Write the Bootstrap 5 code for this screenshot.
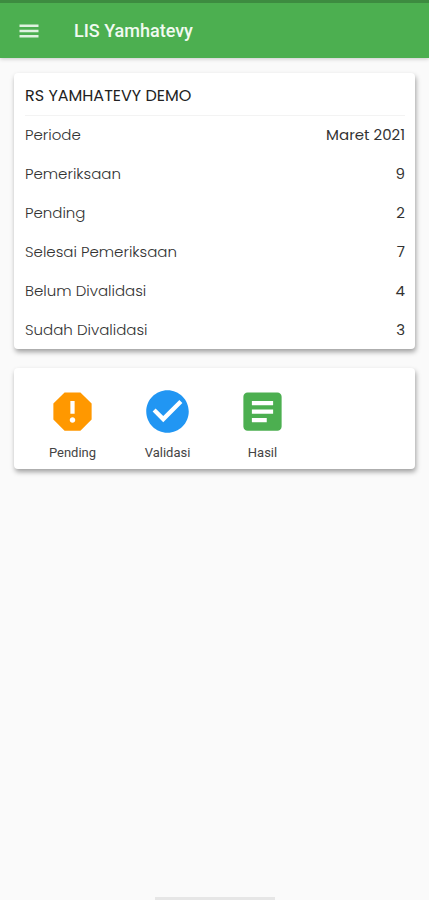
<!DOCTYPE html>
<html lang="id">
<head>
<meta charset="utf-8">
<meta name="viewport" content="width=device-width, initial-scale=1">
<title>LIS Yamhatevy</title>
<link href="https://cdn.jsdelivr.net/npm/bootstrap@5.3.0/dist/css/bootstrap.min.css" rel="stylesheet">
<style>
body { background: #fafafa; font-family: Poppins, Inter, "Liberation Sans", sans-serif; }
.app-bar { background: #4caf50; border-top: 3px solid #3d8b40; height: 58px; padding: 0 17px; gap: 33px; box-shadow: 0 1px 4px rgba(0,0,0,.2); }
.app-title { font: 500 18px/24px Roboto, sans-serif; color: #f1faf1; }
.menu-btn { line-height: 0; color: #dff2e0; }
.page { padding: 15px 14px 0; gap: 19px; }
.panel { border: 0; border-radius: 4px; box-shadow: 1px 3px 5px rgba(0,0,0,.36); }
.summary { padding: 0 10px 0 11px; }
.summary-title { font-size: 16px; line-height: 24px; padding: 11px 0 7px; color: #222; border-bottom: 1px solid #f3f3f3; }
.stats { min-height: 233px; }
.stat { font-size: 15px; line-height: 24px; }
.stat dt { font-weight: 300; color: #333; }
.stat dd { font-weight: 400; color: #333; }
.shortcuts { padding: 18px 11px 8px; }
.shortcut { width: 95px; font: 400 13px/16px Roboto, sans-serif; color: #444; gap: 8px; }
.home-bar { width: 120px; height: 3px; background: #e6e6e6; }
</style>
<script defer src="https://cdn.jsdelivr.net/npm/bootstrap@5.3.0/dist/js/bootstrap.bundle.min.js"></script>
</head>
<body class="d-flex flex-column min-vh-100">
<header class="app-bar d-flex align-items-center">
  <button type="button" class="menu-btn btn p-0 border-0" aria-label="Menu">
    <svg width="24" height="24" viewBox="0 0 24 24" fill="currentColor"><path d="M2.500 18.500h19v-2.500h-19zM2.500 13.200h19v-2.500h-19zM2.500 5.500v2.500h19v-2.500z"/></svg>
  </button>
  <h1 class="app-title m-0">LIS Yamhatevy</h1>
</header>
<main class="page d-flex flex-column flex-grow-1">
  <section class="panel summary card">
    <h2 class="summary-title fw-normal m-0">RS YAMHATEVY DEMO</h2>
    <dl class="stats d-flex flex-column m-0">
      <div class="stat flex-fill d-flex justify-content-between align-items-center"><dt>Periode</dt><dd class="m-0">Maret 2021</dd></div>
      <div class="stat flex-fill d-flex justify-content-between align-items-center"><dt>Pemeriksaan</dt><dd class="m-0">9</dd></div>
      <div class="stat flex-fill d-flex justify-content-between align-items-center"><dt>Pending</dt><dd class="m-0">2</dd></div>
      <div class="stat flex-fill d-flex justify-content-between align-items-center"><dt>Selesai Pemeriksaan</dt><dd class="m-0">7</dd></div>
      <div class="stat flex-fill d-flex justify-content-between align-items-center"><dt>Belum Divalidasi</dt><dd class="m-0">4</dd></div>
      <div class="stat flex-fill d-flex justify-content-between align-items-center"><dt>Sudah Divalidasi</dt><dd class="m-0">3</dd></div>
    </dl>
  </section>
  <nav class="panel shortcuts card flex-row flex-wrap" aria-label="Menu utama">
    <a href="#pending" class="shortcut d-flex flex-column align-items-center text-decoration-none">
      <svg width="51" height="51" viewBox="0 0 24 24" fill="#ff9800" aria-hidden="true"><path d="M15.730 3H8.270L3 8.270v7.460L8.270 21h7.460L21 15.730V8.270L15.730 3zM12 17.300c-.72 0-1.300-.58-1.300-1.300s.58-1.300 1.300-1.300 1.300.58 1.300 1.300-.58 1.300-1.300 1.300zM13 13h-2V7h2z"/></svg>
      <span>Pending</span>
    </a>
    <a href="#validasi" class="shortcut d-flex flex-column align-items-center text-decoration-none">
      <svg width="51" height="51" viewBox="0 0 24 24" fill="#2196f3" aria-hidden="true"><path d="M12 2C6.480 2 2 6.480 2 12s4.480 10 10 10 10-4.480 10-10S17.520 2 12 2zm-2 15l-5-5 1.410-1.410L10 14.170l7.590-7.590L19 8l-9 9z"/></svg>
      <span>Validasi</span>
    </a>
    <a href="#hasil" class="shortcut d-flex flex-column align-items-center text-decoration-none">
      <svg width="51" height="51" viewBox="0 0 24 24" fill="#4caf50" aria-hidden="true"><path d="M19 3H5c-1.100 0-2 .9-2 2v14c0 1.100.9 2 2 2h14c1.100 0 2-.9 2-2V5c0-1.100-.9-2-2-2zm-5 14H7v-2h7v2zm3-4H7v-2h10v2zm0-4H7V7h10v2z"/></svg>
      <span>Hasil</span>
    </a>
  </nav>
</main>
<footer class="d-flex justify-content-center"><div class="home-bar"></div></footer>
</body>
</html>
